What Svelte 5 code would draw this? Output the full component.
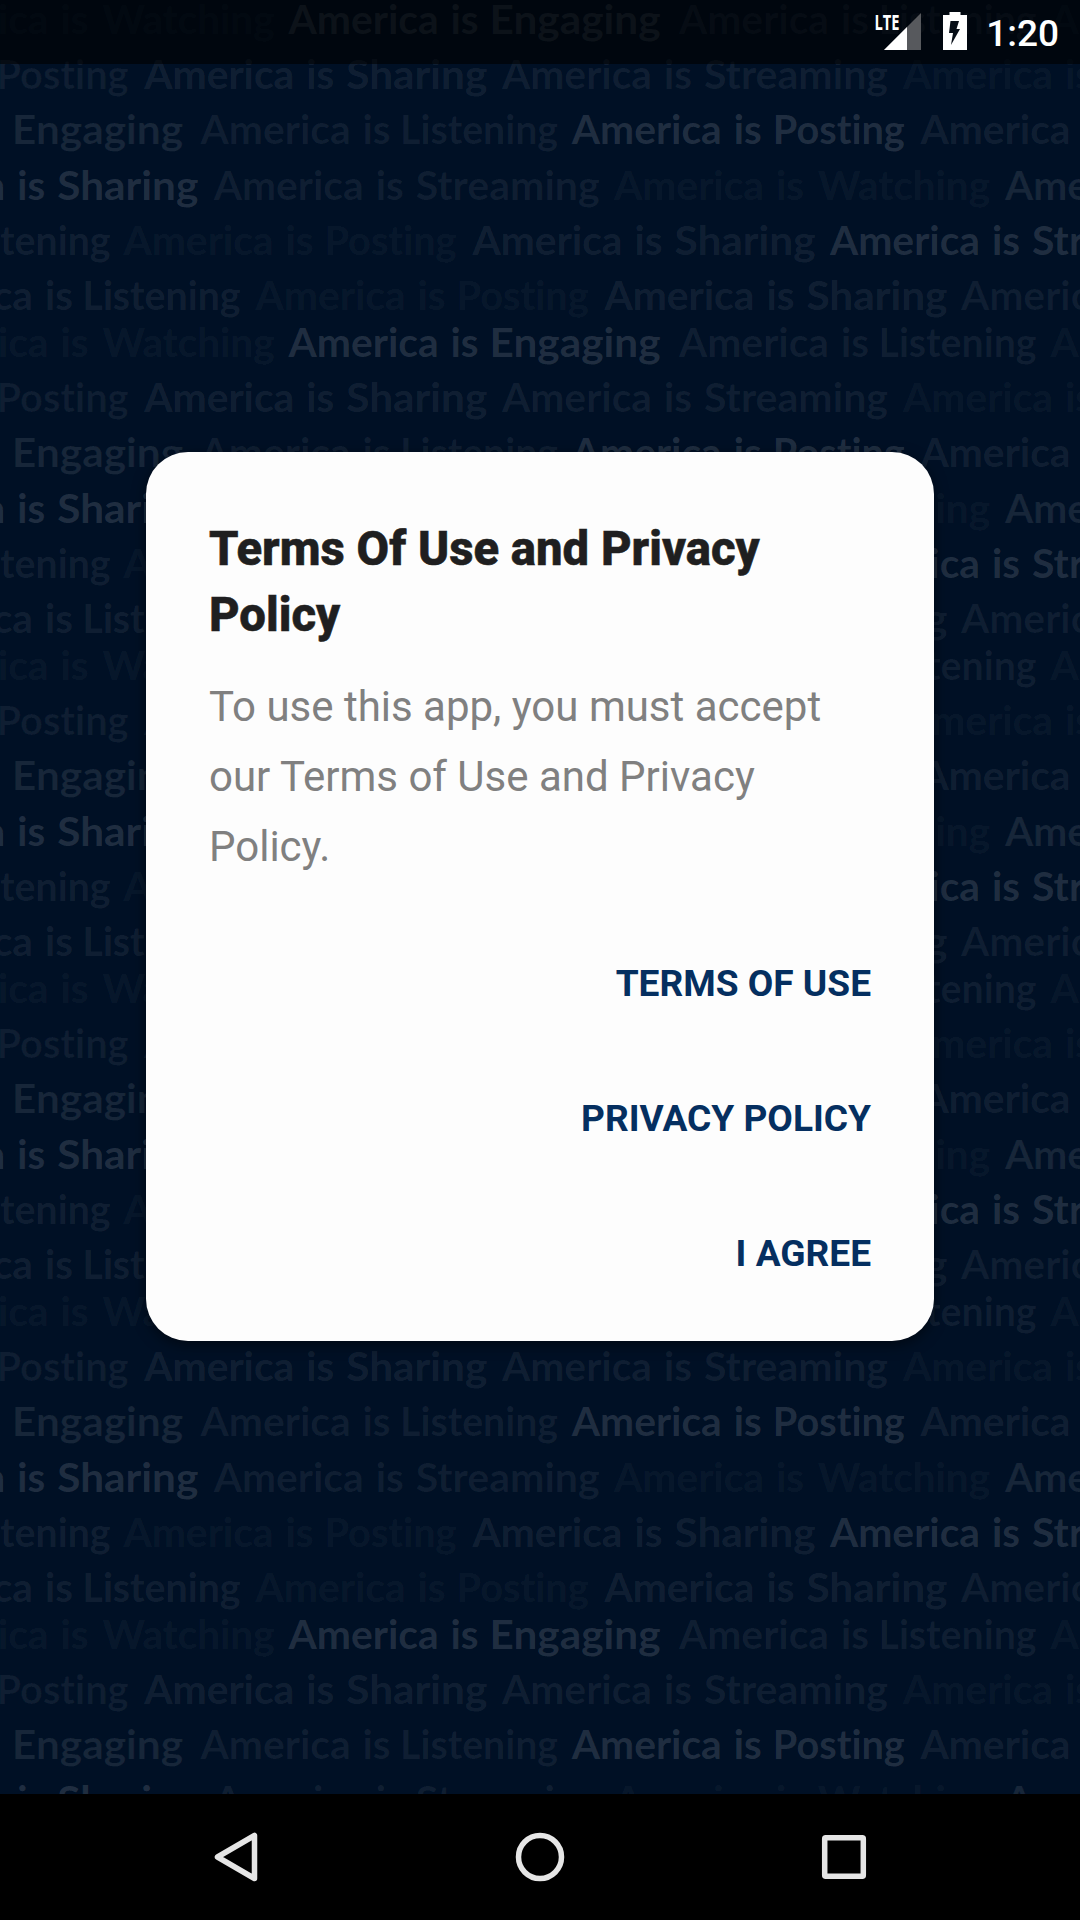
<script>
  // Offset from the phrase start and width of each closing word.
  const verbs = {
    Watching: [204, 172],
    Engaging: [201, 171],
    Listening: [199.5, 158],
    Posting: [201, 132],
    Sharing: [202, 141],
    Streaming: [202, 184]
  };

  // Each row: baseline and its phrases as [x, verb, strength].
  const rows = [
    [34.3, [[-101.5, 'Watching', 0.4], [288.6, 'Engaging', 1], [679, 'Listening', 0.48], [1050.5, 'Watching', 0.38]]],
    [89.3, [[-204.5, 'Posting', 0.44], [144.3, 'Sharing', 0.62], [502, 'Streaming', 0.5], [903, 'Watching', 0.4]]],
    [144.3, [[-189, 'Engaging', 0.66], [200.6, 'Listening', 0.5], [571.8, 'Posting', 1], [920.5, 'Sharing', 0.54]]],
    [200, [[-144.7, 'Sharing', 1], [213.7, 'Streaming', 0.48], [614, 'Watching', 0.4], [1005, 'Engaging', 0.68]]],
    [255.4, [[-247, 'Listening', 0.52], [123.5, 'Posting', 0.4], [472.5, 'Sharing', 0.58], [830, 'Streaming', 1]]],
    [310.2, [[-117, 'Listening', 0.54], [255.6, 'Posting', 0.4], [604.4, 'Sharing', 0.6], [961, 'Streaming', 0.46]]]
  ];

  const TILE = 323;

  // Words outside the screen or completely under the dialog are skipped.
  function visible({ x, y, w }) {
    const onScreen = x + w > 2 && x < 1078 && y < 1824;
    const covered = x > 150 && x + w < 930 && y > 486 && y < 1330;
    return onScreen && !covered;
  }

  const words = [];
  for (let tile = 0; tile < 6; tile++) {
    for (const [base, phrases] of rows) {
      for (const [x, verb, strength] of phrases) {
        const y = base + tile * TILE;
        const o = strength * 0.135;
        const [dx, w] = verbs[verb];
        words.push({ t: 'America', x, y, w: 150, o });
        words.push({ t: 'is', x: x + 162, y, w: 28, o });
        words.push({ t: verb, x: x + dx, y, w, o });
      }
    }
  }
  const shown = words.filter(visible);

  const actions = ['Terms of Use', 'Privacy Policy', 'I Agree'];
</script>

<div class="phone">
  <div class="screen">
    <svg class="wallpaper" width="1080" height="1794" viewBox="0 0 1080 1794" aria-hidden="true">
      {#each shown as word}
        <text x={word.x} y={word.y} textLength={word.w} lengthAdjust="spacingAndGlyphs" fill-opacity={word.o}>{word.t}</text>
      {/each}
    </svg>

    <div class="content">
      <header class="status">
        <svg class="signal" width="48" height="42" viewBox="0 0 48 42">
          <path d="M46 4V41H9z" fill="#57595d" />
          <path d="M32 18V41H9z" fill="#fff" />
          <text x="-0.500" y="20.500" textLength="25" lengthAdjust="spacingAndGlyphs">LTE</text>
        </svg>
        <svg class="battery" width="24" height="38" viewBox="0 0 24 38">
          <path d="M6.500 0h11v3H24v35H0V3h6.500z" fill="#fff" />
          <path d="M7.500 9h8.500l-2.500 8H17L8 33l2-12H6z" fill="#060d16" />
        </svg>
        <span class="clock">1:20</span>
      </header>

      <main>
        <section class="dialog">
          <h1>Terms Of Use and Privacy Policy</h1>
          <p>To use this app, you must accept our Terms of Use and Privacy Policy.</p>
          <div class="actions">
            {#each actions as action}
              <button type="button">{action}</button>
            {/each}
          </div>
        </section>
      </main>
    </div>
  </div>

  <nav>
    <svg width="50" height="50" viewBox="0 0 50 50">
      <path d="M43.500 3.500V46.500L6.500 25z" />
    </svg>
    <svg width="50" height="50" viewBox="0 0 50 50">
      <circle cx="25" cy="25" r="21.500" />
    </svg>
    <svg width="50" height="50" viewBox="0 0 50 50">
      <rect x="5.700" y="5.700" width="38.600" height="38.600" rx="1" />
    </svg>
  </nav>
</div>

<style>
  :global(body) {
    margin: 0;
    background: #000;
  }

  .phone {
    width: 1080px;
    height: 1920px;
    display: grid;
    grid-template-rows: 1794px 126px;
    overflow: hidden;
    font-family: Roboto, sans-serif;
  }

  .screen {
    display: grid;
    background: #001025;
    overflow: hidden;
  }

  .wallpaper,
  .content {
    grid-area: 1 / 1;
  }

  .wallpaper text {
    font: 700 41px Lato, sans-serif;
    font-variant-ligatures: none;
    fill: #fff;
  }

  .content {
    display: grid;
    grid-template-rows: 64px 1fr;
    z-index: 1;
  }

  .status {
    display: flex;
    align-items: flex-start;
    justify-content: flex-end;
    box-sizing: border-box;
    padding: 12px 21px 0 0;
    background: rgba(0, 0, 0, 0.6);
  }

  .signal {
    margin: -3px 20px 0 0;
    overflow: visible;
  }

  .signal text {
    font: 700 21.500px "Open Sans", sans-serif;
    fill: #fff;
  }

  .battery {
    margin-right: 19px;
  }

  .clock {
    padding-top: 1px;
    font-size: 37px;
    font-weight: 500;
    line-height: 42px;
    color: #fff;
  }

  main {
    display: flex;
    justify-content: center;
    align-items: flex-start;
    padding-top: 388px;
  }

  .dialog {
    box-sizing: border-box;
    width: 788px;
    height: 889px;
    padding: 64px 63px 0;
    border-radius: 42px;
    background: #fdfdfd;
    box-shadow: 0 4px 14px rgba(0, 0, 0, 0.5);
  }

  h1 {
    margin: 0;
    font-size: 47.250px;
    font-weight: 800;
    line-height: 66px;
    color: #1f1f20;
    -webkit-text-stroke: 0.600px #1f1f20;
  }

  p {
    margin: 24px 0 0;
    font-size: 42px;
    line-height: 70px;
    color: #808080;
  }

  .actions {
    display: flex;
    flex-direction: column;
    align-items: flex-end;
    margin-top: 34px;
  }

  button {
    height: 135px;
    padding: 0;
    border: 0;
    background: none;
    font: 700 37.100px Roboto, sans-serif;
    text-transform: uppercase;
    color: #052f60;
  }

  nav {
    display: flex;
    justify-content: center;
    align-items: center;
    gap: 254px;
    background: #000;
  }

  nav svg {
    fill: none;
    stroke: #e6e6e6;
    stroke-width: 5.500px;
    stroke-linejoin: round;
  }
</style>
